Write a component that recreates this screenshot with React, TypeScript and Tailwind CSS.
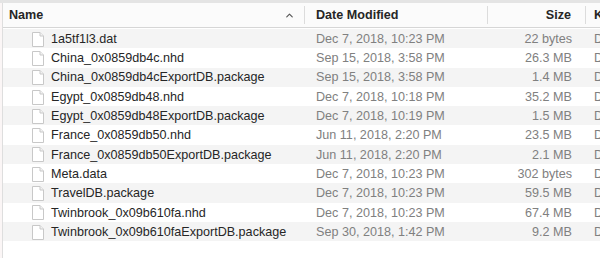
import { ChevronUp } from "lucide-react"

const files = [
  { name: "1a5tf1l3.dat", date: "Dec 7, 2018, 10:23 PM", size: "22 bytes", kind: "Do" },
  { name: "China_0x0859db4c.nhd", date: "Sep 15, 2018, 3:58 PM", size: "26.3 MB", kind: "Do" },
  { name: "China_0x0859db4cExportDB.package", date: "Sep 15, 2018, 3:58 PM", size: "1.4 MB", kind: "Do" },
  { name: "Egypt_0x0859db48.nhd", date: "Dec 7, 2018, 10:18 PM", size: "35.2 MB", kind: "Do" },
  { name: "Egypt_0x0859db48ExportDB.package", date: "Dec 7, 2018, 10:19 PM", size: "1.5 MB", kind: "Do" },
  { name: "France_0x0859db50.nhd", date: "Jun 11, 2018, 2:20 PM", size: "23.5 MB", kind: "Do" },
  { name: "France_0x0859db50ExportDB.package", date: "Jun 11, 2018, 2:20 PM", size: "2.1 MB", kind: "Do" },
  { name: "Meta.data", date: "Dec 7, 2018, 10:23 PM", size: "302 bytes", kind: "Do" },
  { name: "TravelDB.package", date: "Dec 7, 2018, 10:23 PM", size: "59.5 MB", kind: "Do" },
  { name: "Twinbrook_0x09b610fa.nhd", date: "Dec 7, 2018, 10:23 PM", size: "67.4 MB", kind: "Do" },
  { name: "Twinbrook_0x09b610faExportDB.package", date: "Sep 30, 2018, 1:42 PM", size: "9.2 MB", kind: "Do" },
]

function FileIcon() {
  return (
    <svg width="12" height="15" viewBox="0 0 12 15" className="shrink-0">
      <path
        d="M0.5 0.5 H8 L11.5 4 V14.5 H0.5 Z"
        fill="#ffffff"
        stroke="#c8c8c8"
        strokeWidth="1"
      />
      <path d="M8 0.5 V4 H11.5" fill="#f2f2f2" stroke="#c8c8c8" strokeWidth="1" />
    </svg>
  )
}

export default function App() {
  return (
    <div
      className="w-[600px] h-[258px] overflow-hidden bg-white text-[12.6px] leading-none"
      style={{ fontFamily: '"Liberation Sans", Arial, sans-serif' }}
    >
      <div className="h-[3px] bg-[#e4e4e4]" />
      <div className="flex h-[258px]">
        <div className="w-[3px] shrink-0 border-r border-[#dedede] bg-[#fbf6f6]" />
        <div className="flex-1 flex flex-col">
          {/* header */}
          <div className="flex h-[25px] items-center border-b border-[#d6d6d6] bg-[#fbfbfb] text-[#262626] font-bold">
            <div className="w-[302px] flex items-center justify-between pl-[6px] pr-[9px] border-r border-[#dcdcdc] h-[18px]">
              <span>Name</span>
              <ChevronUp className="w-[11px] h-[11px] text-[#555]" strokeWidth={2.5} />
            </div>
            <div className="w-[183px] pl-[11px] border-r border-[#dcdcdc] h-[18px] flex items-center">
              Date Modified
            </div>
            <div className="w-[98px] pr-[14px] border-r border-[#dcdcdc] h-[18px] flex items-center justify-end">
              Size
            </div>
            <div className="pl-[8px]">K</div>
          </div>
          {/* rows */}
          <div className="pt-[1px]">
            {files.map((f, i) => (
              <div
                key={f.name}
                className={`flex h-[19.3px] items-center pt-[1px] ${i % 2 === 0 ? "bg-[#f4f4f4]" : "bg-white"}`}
              >
                <div className="w-[302px] flex items-center gap-[7px] pl-[29px] text-[#262626]">
                  <FileIcon />
                  <span>{f.name}</span>
                </div>
                <div className="w-[183px] pl-[11px] text-[#808080]">{f.date}</div>
                <div className="w-[98px] pr-[14px] text-right text-[#808080]">{f.size}</div>
                <div className="pl-[8px] text-[#808080]">{f.kind.slice(0, 1)}</div>
              </div>
            ))}
          </div>
        </div>
      </div>
    </div>
  )
}
